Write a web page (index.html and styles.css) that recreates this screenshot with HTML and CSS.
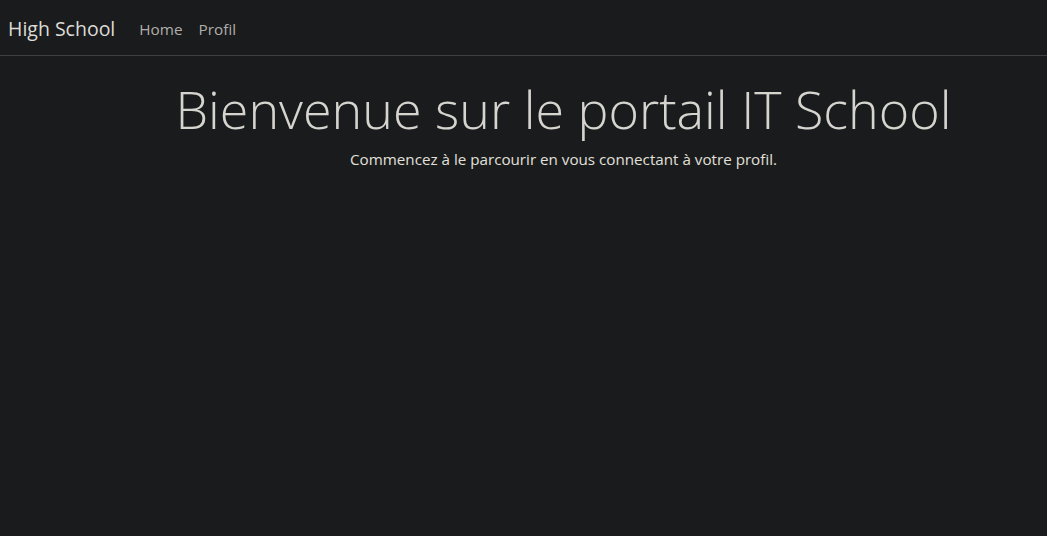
FILE: index.html
```html
<!DOCTYPE html>
<html lang="fr">
<head>
<meta charset="utf-8">
<title>High School</title>
<link rel="stylesheet" href="styles.css">
</head>
<body>
<nav class="navbar">
  <a class="brand" href="#">High School</a>
  <ul class="nav-links">
    <li><a href="#">Home</a></li>
    <li><a href="#">Profil</a></li>
  </ul>
</nav>
<main class="hero">
  <h1 class="display">Bienvenue sur le portail IT School</h1>
  <p class="lead">Commencez à le parcourir en vous connectant à votre profil.</p>
</main>
</body>
</html>
```
FILE: styles.css
```css
html, body {
  margin: 0;
  padding: 0;
  height: 100%;
}
body {
  background: #1a1b1d;
  color: #d6d4cf;
  font-family: "Open Sans", "Noto Sans", sans-serif;
  font-size: 16px;
}
.navbar {
  display: flex;
  align-items: center;
  height: 56px;
  padding: 2px 8px 0;
  border-bottom: 1px solid #3f4042;
  box-sizing: border-box;
}
.brand {
  color: #dedcd7;
  font-size: 19.5px;
  text-decoration: none;
  margin-right: 24px;
}
.nav-links {
  display: flex;
  list-style: none;
  margin: 0;
  padding: 0;
  gap: 16px;
}
.nav-links a {
  color: #b0aeaa;
  text-decoration: none;
  font-size: 15.3px;
}
.hero {
  padding-left: 80px;
  text-align: center;
  padding-top: 22px;
}
.display {
  font-weight: 300;
  font-size: 52px;
  line-height: 1.2;
  margin: 0;
  color: #d6d4cf;
}
.lead {
  margin: 9px 0 0;
  font-size: 15.2px;
  color: #e2e0db;
}
```
